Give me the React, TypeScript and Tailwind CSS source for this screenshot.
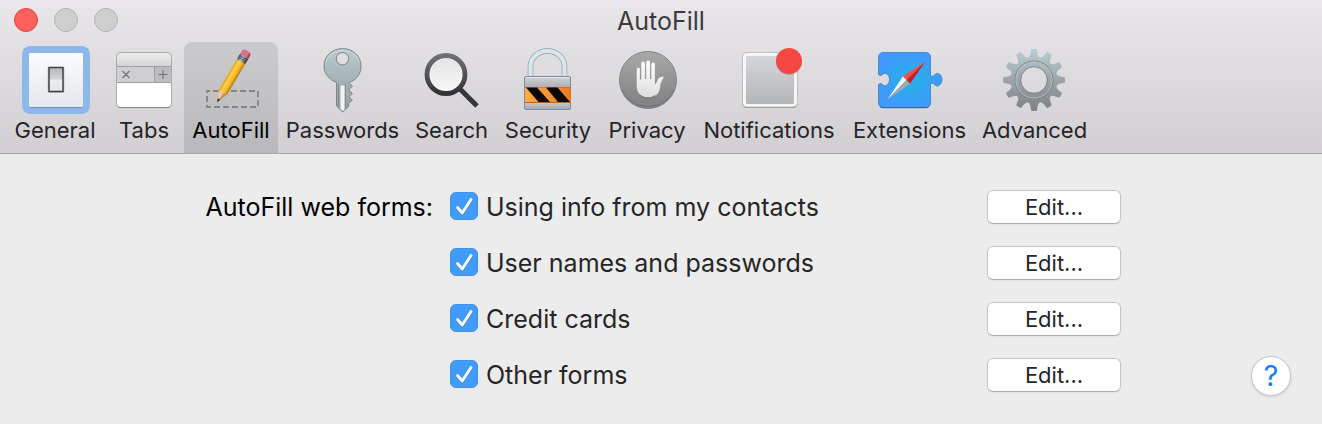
// App.tsx
// Browser preferences window with the AutoFill pane open.

import React from "react"

interface TabItem {
    label: string;
    width: string;
    icon: React.ReactNode;
}

interface IconProps {
    children: React.ReactNode;
}

const Icon: React.FC<IconProps> = ({ children }) => (
    <svg viewBox="0 0 70 70" className="size-[70px] shrink-0" aria-hidden="true">
        {children}
    </svg>
)

const GeneralIcon = () => (
    <Icon>
        <defs>
            <linearGradient id="plate" x1="0" y1="0" x2="0" y2="1">
                <stop offset="0" stopColor="#fbfbfd" />
                <stop offset="1" stopColor="#e4e8ec" />
            </linearGradient>
            <linearGradient id="toggle" x1="0" y1="0" x2="0" y2="1">
                <stop offset="0" stopColor="#b5b7ba" />
                <stop offset="0.48" stopColor="#cfd1d3" />
                <stop offset="0.52" stopColor="#eceef0" />
                <stop offset="1" stopColor="#e2e5e8" />
            </linearGradient>
        </defs>
        <rect x="2" y="1" width="68" height="68" rx="8" fill="#8db9ea" />
        <rect x="9" y="8.5" width="54" height="54.5" rx="1" fill="#6d93bb" />
        <rect x="9" y="8" width="54" height="54" rx="1" fill="url(#plate)" />
        <rect x="27.5" y="22" width="17" height="26" rx="2" fill="#c6cad0" />
        <rect x="29" y="22.5" width="14" height="24" fill="url(#toggle)" stroke="#3f4245" strokeWidth="1.5" />
    </Icon>
)

const TabsIcon = () => (
    <Icon>
        <defs>
            <linearGradient id="tabsTop" x1="0" y1="0" x2="0" y2="1">
                <stop offset="0" stopColor="#efeeef" />
                <stop offset="1" stopColor="#d3d2d4" />
            </linearGradient>
        </defs>
        <rect x="7.5" y="7.5" width="55" height="55" rx="4" fill="#fff" />
        <path d="M7.5 21.5V11.5a4 4 0 0 1 4-4h47a4 4 0 0 1 4 4v10z" fill="url(#tabsTop)" />
        <rect x="7.5" y="21.5" width="38" height="16" fill="#cfced0" />
        <rect x="45.5" y="21.5" width="17" height="16" fill="#bdbcbe" />
        <path d="M7.5 21.5h55M7.5 37.5h55M45.5 21.5v16" stroke="#a09fa1" />
        <path d="M13.500 26l7 7m0-7l-7 7M49.500 29.500h9M54 25v9" stroke="#757476" strokeWidth="1.2" />
        <rect x="7.5" y="7.5" width="55" height="55" rx="4" fill="none" stroke="#aaa9ab" />
        <path d="M10 62.500h50" stroke="#858486" />
    </Icon>
)

const AutoFillIcon = () => (
    <Icon>
        <defs>
            <linearGradient id="wood" x1="0" y1="0" x2="1" y2="0">
                <stop offset="0" stopColor="#e5a013" />
                <stop offset="0.3" stopColor="#ffd24d" />
                <stop offset="0.65" stopColor="#fbb92b" />
                <stop offset="1" stopColor="#b47613" />
            </linearGradient>
            <linearGradient id="ferrule" x1="0" y1="0" x2="1" y2="0">
                <stop offset="0" stopColor="#3e5f70" />
                <stop offset="0.4" stopColor="#a8c0ca" />
                <stop offset="1" stopColor="#4a3230" />
            </linearGradient>
        </defs>
        <rect x="11" y="46" width="51" height="16" fill="none" stroke="#858587" strokeWidth="1.8" strokeDasharray="6 3" strokeDashoffset="3" />
        <g transform="translate(21 57.5) rotate(30.5)">
            <path d="M0 0L-4.800 -12H4.800z" fill="#efc79d" />
            <path d="M0 0L4.800 -12H1z" fill="#b98e69" />
            <path d="M0 0L-1.400 -4H1.400z" fill="#2c2b2d" />
            <path d="M-4.800 -12l2.300 1 2.500 -1 2.500 1 2.300 -1V-48h-9.600z" fill="url(#wood)" />
            <rect x="-4.8" y="-54" width="9.600" height="6.500" fill="url(#ferrule)" />
            <path d="M-4.800 -52h9.600M-4.800 -50h9.600" stroke="#34434b" strokeWidth="0.6" />
            <path d="M-4.800 -53.500v-3.500q0 -3 4.800 -3t4.800 3v3.500z" fill="#dc6f91" />
            <path d="M2.700 -53.500v-6q2.100 .800 2.100 2.500v3.500z" fill="#a8415f" />
        </g>
    </Icon>
)

const PasswordsIcon = () => (
    <Icon>
        <defs>
            <linearGradient id="keyMetal" x1="0" y1="0" x2="0" y2="1">
                <stop offset="0" stopColor="#bccbcf" />
                <stop offset="0.5" stopColor="#a5b1b5" />
                <stop offset="1" stopColor="#9b9fa2" />
            </linearGradient>
        </defs>
        <path
            fillRule="evenodd"
            d="M34.5 3.6C24.3 3.6 16 11 16 21c0 8.200 5.600 13.600 12.500 16.500V61l6.300 6 5.700-5.500v-3l3.800-3.300-3-3.400 3-3.400-3.500-3.600 3.500-3.600-3-3.200v-.5C48 35 53 29.500 53 21 53 11 44.700 3.600 34.500 3.600zM34.500 7.500a6.200 6.200 0 1 1 0 12.400 6.200 6.200 0 0 1 0-12.400z"
            fill="url(#keyMetal)"
            stroke="#7c868a"
            strokeWidth="1"
        />
        <path d="M18 17C20 9.500 27 5.500 34.500 5.500S49 9.500 51 17" fill="none" stroke="#d5e0e3" strokeWidth="0.8" />
        <path d="M32.500 40.500H36.500V65l-1.500 1-2.500-2z" fill="#f1f3f4" />
        <path d="M30.500 39v22M37.500 39v23.500" stroke="#7f8789" strokeWidth="0.8" />
    </Icon>
)

const SearchIcon = () => (
    <Icon>
        <defs>
            <linearGradient id="ring" x1="0" y1="0" x2="0" y2="1">
                <stop offset="0" stopColor="#717173" />
                <stop offset="1" stopColor="#333335" />
            </linearGradient>
            <linearGradient id="lens" x1="0" y1="0" x2="0" y2="1">
                <stop offset="0" stopColor="#e4e4e6" />
                <stop offset="1" stopColor="#f8f8f9" />
            </linearGradient>
        </defs>
        <path d="M42.500 43.500L60 61" stroke="#363638" strokeWidth="5" />
        <circle cx="29" cy="29.500" r="19" fill="url(#lens)" stroke="url(#ring)" strokeWidth="4.800" />
    </Icon>
)

const SecurityIcon = () => (
    <Icon>
        <defs>
            <linearGradient id="lockBody" x1="0" y1="0" x2="0" y2="1">
                <stop offset="0" stopColor="#d0d3d7" />
                <stop offset="0.35" stopColor="#a9acb1" />
                <stop offset="0.8" stopColor="#c5c7ca" />
                <stop offset="1" stopColor="#a2a7af" />
            </linearGradient>
            <linearGradient id="hazard" x1="0" y1="0" x2="1" y2="0">
                <stop offset="0" stopColor="#ffad43" />
                <stop offset="1" stopColor="#ee7a1c" />
            </linearGradient>
        </defs>
        <path d="M17.500 33V21.500a17 15.500 0 0 1 34 0V33" fill="none" stroke="#92a0aa" strokeWidth="5.600" />
        <path d="M17.500 33V21.500a17 15.500 0 0 1 34 0V33" fill="none" stroke="#d8e5ea" strokeWidth="4.200" />
        <rect x="11.500" y="31.500" width="46" height="33" rx="1.500" fill="url(#lockBody)" stroke="#7f8ca3" />
        <path d="M13 32.500h43" stroke="#e7e9eb" />
        <rect x="12" y="42" width="45.500" height="16" fill="#b4621d" />
        <rect x="12" y="42.500" width="45.500" height="14.500" fill="url(#hazard)" />
        <path d="M13 42.500h11l13 14.500H25.500zM33 42.500h11.500L57 57H45z" fill="#090807" />
    </Icon>
)

const PrivacyIcon = () => (
    <Icon>
        <defs>
            <linearGradient id="disc" x1="0" y1="0" x2="0" y2="1">
                <stop offset="0" stopColor="#a9a9aa" />
                <stop offset="1" stopColor="#7f7f81" />
            </linearGradient>
            <linearGradient id="palm" x1="0" y1="0" x2="0" y2="1">
                <stop offset="0" stopColor="#fff" />
                <stop offset="1" stopColor="#dededf" />
            </linearGradient>
        </defs>
        <circle cx="36" cy="35" r="28.500" fill="url(#disc)" stroke="#858587" />
        <path d="M10 44a28 28 0 0 0 52 0" fill="none" stroke="#626264" strokeWidth="0.8" opacity="0.5" />
        <path
            d="M24.700 24.500q0-2 1.600-2t1.600 2v10h1.400V18.500q0-2 1.800-2t1.800 2v15.500h1.300V17.500q0-2 1.900-2t1.900 2V34h1.300V19.500q0-2 1.800-2t1.800 2v20c1.300-1.200 1.900-2.700 2.800-4.500 1.200-2.600 3.200-3.500 6.300-3-1.500 2-2.600 4.600-3.700 7.700C48 48 44.500 52.500 36.500 52.500 28.500 52.500 24.700 47.500 24.700 41z"
            fill="url(#palm)"
        />
        <path d="M27.500 50q7 6 16 .500" fill="none" stroke="#69696b" strokeWidth="0.8" />
    </Icon>
)

const NotificationsIcon = () => (
    <Icon>
        <defs>
            <linearGradient id="screen" x1="0" y1="0" x2="0" y2="1">
                <stop offset="0" stopColor="#d4d6da" />
                <stop offset="1" stopColor="#b3b5b7" />
            </linearGradient>
        </defs>
        <rect x="8.500" y="8" width="55" height="55" rx="4.500" fill="#858484" />
        <rect x="8.500" y="7.500" width="55" height="54.500" rx="4.500" fill="#f7f6f5" stroke="#c1c0c2" />
        <rect x="12" y="11" width="48" height="48" rx="1.500" fill="url(#screen)" />
        <circle cx="55" cy="17" r="13" fill="#000" opacity="0.16" />
        <circle cx="55" cy="16" r="13" fill="#f44643" />
    </Icon>
)

const ExtensionsIcon = () => (
    <Icon>
        <defs>
            <radialGradient id="ocean">
                <stop offset="0" stopColor="#22b4e8" />
                <stop offset="1" stopColor="#4199fa" />
            </radialGradient>
        </defs>
        <path
            d="M8 7.500h43a4.500 4.500 0 0 1 4.500 4.500v18c.800 2 3 1.200 4.500-.500 3-3 7 .500 7 5s-4 8.500-7 5.500c-1.500-1.700-3.700-2.500-4.500-.500V58a4.500 4.500 0 0 1-4.500 4.500H8A4.500 4.500 0 0 1 3.500 58V40c.500-2 2.500-2 4-.500 3.200 3.200 7-.500 7-5s-3.800-8-7-5c-1.500 1.500-3.500 1.500-4-.500V12A4.500 4.500 0 0 1 8 7.500z"
            fill="url(#ocean)"
            stroke="#397fc7"
            strokeWidth="0.8"
        />
        <path d="M5 61.500q1 1.200 3 1.200h43q2 0 3-1.200" fill="none" stroke="#285f9b" />
        <path d="M50.500 16.500L27.800 31.500l3.700 3.500z" fill="#fb4b43" />
        <path d="M50.500 16.500L35 38.800 31.500 35z" fill="#c91e2c" />
        <path d="M12.500 54.500L27.800 31.500l3.700 3.500z" fill="#f4f5f5" />
        <path d="M12.500 54.500L35 38.800 31.500 35z" fill="#a4a9aa" />
    </Icon>
)

const AdvancedIcon = () => (
    <Icon>
        <defs>
            <linearGradient id="gearMetal" gradientUnits="userSpaceOnUse" x1="0" y1="4" x2="0" y2="66">
                <stop offset="0" stopColor="#bbcdd3" />
                <stop offset="0.5" stopColor="#9ba5a8" />
                <stop offset="1" stopColor="#7e8284" />
            </linearGradient>
            <mask id="gearShape">
                <circle cx="34" cy="35" r="23.500" fill="#fff" />
                {[0, 30, 60, 90, 120, 150, 180, 210, 240, 270, 300, 330].map((angle) => (
                    <path
                        key={angle}
                        d="M28.500 13Q30.800 10 31 5.200q.2-1.200 1.200-1.200h3.600q1 0 1.200 1.200 .200 4.800 2.500 7.800z"
                        transform={`rotate(${angle} 34 35)`}
                        fill="#fff"
                    />
                ))}
                <circle cx="34" cy="35" r="13" fill="#000" />
            </mask>
        </defs>
        <rect width="70" height="70" fill="url(#gearMetal)" mask="url(#gearShape)" />
        <circle cx="34" cy="35" r="19" fill="none" stroke="#7b8488" strokeWidth="1" />
        <circle cx="34" cy="35" r="18" fill="none" stroke="#bcc7ca" strokeWidth="0.8" />
        <circle cx="34" cy="35" r="13.300" fill="none" stroke="#767e81" strokeWidth="0.8" />
    </Icon>
)

const tabs: TabItem[] = [
    { label: "General", width: "w-[98px]", icon: <GeneralIcon /> },
    { label: "Tabs", width: "w-[80px]", icon: <TabsIcon /> },
    { label: "AutoFill", width: "w-[94px]", icon: <AutoFillIcon /> },
    { label: "Passwords", width: "w-[129px]", icon: <PasswordsIcon /> },
    { label: "Search", width: "w-[89px]", icon: <SearchIcon /> },
    { label: "Security", width: "w-[104px]", icon: <SecurityIcon /> },
    { label: "Privacy", width: "w-[94px]", icon: <PrivacyIcon /> },
    { label: "Notifications", width: "w-[150px]", icon: <NotificationsIcon /> },
    { label: "Extensions", width: "w-[131px]", icon: <ExtensionsIcon /> },
    { label: "Advanced", width: "w-[119px]", icon: <AdvancedIcon /> },
]

const options = [
    { id: "contacts", label: "Using info from my contacts" },
    { id: "passwords", label: "User names and passwords" },
    { id: "cards", label: "Credit cards" },
    { id: "other", label: "Other forms" },
]

const TitleBar = () => (
    <div className="grid h-[42px] grid-cols-[1fr_auto_1fr] items-start">
        <div className="flex gap-4 pt-2 pl-3.5">
            <button aria-label="Close" className="size-6 rounded-full border border-[#e2463f] bg-[#fc615d]" />
            <button aria-label="Minimize" className="size-6 rounded-full border border-[#b4b3b5] bg-[#d0cfd0]" />
            <button aria-label="Zoom" className="size-6 rounded-full border border-[#b4b3b5] bg-[#d0cfd0]" />
        </div>
        <h1 className="text-[25px] leading-[42px] text-[#3c3a3d]">AutoFill</h1>
    </div>
)

const Toolbar = () => (
    <nav className="flex pl-1.5">
        {tabs.map((tab) => (
            <button
                key={tab.label}
                aria-pressed={tab.label === "AutoFill"}
                className={`flex h-[111px] flex-col items-center rounded-t-lg pt-[3px] text-[22px] leading-[30px] whitespace-nowrap ${tab.width} ${
                    tab.label === "AutoFill" ? "bg-linear-to-b from-[#cbcacc] to-[#b9b8ba] text-black" : "text-[#262427]"
                }`}
            >
                {tab.icon}
                {tab.label}
            </button>
        ))}
    </nav>
)

interface OptionRowProps {
    id: string;
    label: string;
}

const OptionRow: React.FC<OptionRowProps> = ({ id, label }) => {
    const [checked, setChecked] = React.useState(true)

    return (
        <div className="flex h-14 items-start justify-between">
            <div className="flex items-start gap-2">
                <div className="relative mt-3.5 size-7">
                    <input
                        id={id}
                        type="checkbox"
                        checked={checked}
                        onChange={(e) => setChecked(e.target.checked)}
                        className="block size-7 appearance-none rounded-md border border-gray-300 bg-white checked:border-[#3c92f4] checked:bg-[#419bf9]"
                    />
                    {checked && (
                        <svg viewBox="0 0 28 28" className="pointer-events-none absolute inset-0" fill="none" strokeLinecap="round" strokeLinejoin="round" aria-hidden="true">
                            <path d="M7.500 16.500l4.800 5.500L21 8.500" stroke="#2f7fd6" strokeWidth="2.5" />
                            <path d="M7.500 15.500l4.800 5.500L21 7.500" stroke="#fff" strokeWidth="2.8" />
                        </svg>
                    )}
                </div>
                <label htmlFor={id} className="text-[25px] leading-[58px] text-[#262626]">{label}</label>
            </div>
            <button
                aria-label={`Edit... ${label}`}
                className="mt-3 h-[34px] w-[134px] rounded-md border border-[#c6c6c6] border-b-[#adadad] bg-white text-[22px] leading-8 text-[#262626] shadow-xs"
            >
                Edit...
            </button>
        </div>
    )
}

export default function App() {
    return (
        <div className="min-h-screen bg-[#ececec] font-['Inter','Liberation_Sans',sans-serif]">
            <header className="border-b border-[#a9a8aa] bg-linear-to-b from-[#e9e7ea] to-[#d1cfd2]">
                <TitleBar />
                <Toolbar />
            </header>

            <main className="flex pt-6 pr-[31px] pb-[22px]">
                <h2 className="w-[433px] shrink-0 text-right text-[25px] leading-[58px] text-black">AutoFill web forms:</h2>
                <div role="group" aria-label="AutoFill web forms" className="grow pl-[17px]">
                    {options.map((option) => (
                        <OptionRow key={option.id} id={option.id} label={option.label} />
                    ))}
                </div>
                <div className="flex w-[170px] shrink-0 items-end justify-end pb-1.5">
                    <button aria-label="Help" className="size-10 rounded-full border border-[#c8c8c8] bg-white text-[29px] leading-9 text-[#147efb] shadow-sm">
                        ?
                    </button>
                </div>
            </main>
        </div>
    )
}
